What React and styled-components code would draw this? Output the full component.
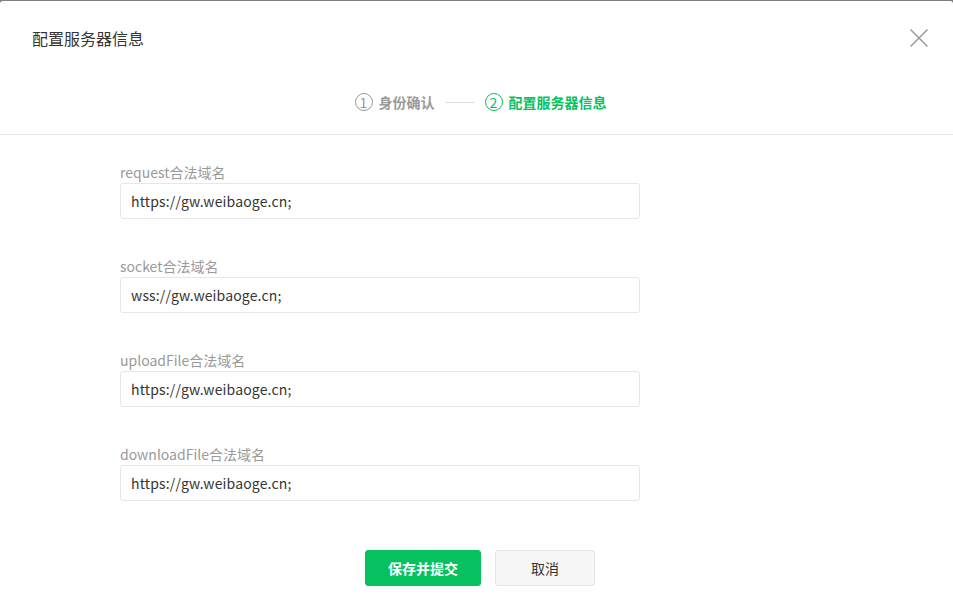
import React from 'react';
import styled, { createGlobalStyle } from 'styled-components';

const GlobalStyle = createGlobalStyle`
  html, body {
    margin: 0;
    padding: 0;
    background: #7f7f7f;
    font-family: "Noto Sans CJK SC", "Noto Sans", sans-serif;
  }
  * { box-sizing: border-box; }
`;

const Dialog = styled.div`
  margin-top: 1px;
  height: 607px;
  background: #fff;
  border-radius: 3px 3px 0 0;
  overflow: hidden;
`;

const Header = styled.div`
  height: 73px;
  padding: 0 25px 0 32px;
  display: flex;
  align-items: center;
  justify-content: space-between;
`;

const Title = styled.h3`
  margin: 0;
  font-size: 16px;
  font-weight: 400;
  color: #353535;
`;

const Close = styled.button`
  width: 18px;
  height: 18px;
  padding: 0;
  border: 0;
  background: none;
  display: flex;
  cursor: pointer;
`;

const Steps = styled.div`
  height: 61px;
  padding: 17px 0 21px 8px;
  border-bottom: 1px solid #e7e7e7;
  display: flex;
  justify-content: center;
  align-items: center;
`;

const Step = styled.div`
  display: flex;
  align-items: center;
  gap: 6px;
  font-size: 14px;
  font-weight: 700;
  color: ${p => (p.$active ? '#07c160' : '#9a9a9a')};
`;

const Num = styled.span`
  width: 18px;
  height: 18px;
  border-radius: 50%;
  border: 1.5px solid currentColor;
  display: flex;
  align-items: center;
  justify-content: center;
  font-size: 14px;
  font-weight: 400;
  line-height: 1;
`;

const Line = styled.span`
  width: 30px;
  height: 1px;
  background: #dcdfe3;
  margin: 0 10px;
`;

const Form = styled.div`
  padding: 27px 0 0 120px;
  display: flex;
  flex-direction: column;
  gap: 37px;
`;

const Field = styled.div`
  display: flex;
  flex-direction: column;
  gap: 1px;
`;

const Label = styled.label`
  font-size: 14px;
  line-height: 20px;
  color: #9a9a9a;
`;

const Input = styled.input`
  width: 520px;
  height: 36px;
  border: 1px solid #e7e7e7;
  border-radius: 3px;
  padding: 0 10px;
  font-family: inherit;
  font-size: 14px;
  letter-spacing: 0.15px;
  color: #353535;
  outline: none;
`;

const Actions = styled.div`
  margin-top: 49px;
  display: flex;
  justify-content: center;
  gap: 14px;
  padding-left: 7px;
`;

const Button = styled.button`
  height: 36px;
  width: ${p => (p.$primary ? '116px' : '100px')};
  border-radius: 3px;
  border: 1px solid ${p => (p.$primary ? '#07c160' : '#e4e6e9')};
  background: ${p => (p.$primary ? '#07c160' : '#f7f7f7')};
  color: ${p => (p.$primary ? '#fff' : '#353535')};
  font-family: inherit;
  font-size: 14px;
  font-weight: ${p => (p.$primary ? 700 : 400)};
  cursor: pointer;
`;

const fields = [
  { label: 'request合法域名', value: 'https://gw.weibaoge.cn;' },
  { label: 'socket合法域名', value: 'wss://gw.weibaoge.cn;' },
  { label: 'uploadFile合法域名', value: 'https://gw.weibaoge.cn;' },
  { label: 'downloadFile合法域名', value: 'https://gw.weibaoge.cn;' },
];

export default function App() {
  return (
    <>
      <GlobalStyle />
      <Dialog>
        <Header>
          <Title>配置服务器信息</Title>
          <Close aria-label="关闭">
            <svg width="18" height="18" viewBox="0 0 18 18">
              <path d="M0.5 0.5L17.5 17.5M17.5 0.5L0.5 17.5" stroke="#9a9a9a" strokeWidth="1.5" fill="none" />
            </svg>
          </Close>
        </Header>
        <Steps>
          <Step>
            <Num>1</Num>
            身份确认
          </Step>
          <Line />
          <Step $active>
            <Num>2</Num>
            配置服务器信息
          </Step>
        </Steps>
        <Form>
          {fields.map(f => (
            <Field key={f.label}>
              <Label>{f.label}</Label>
              <Input defaultValue={f.value} />
            </Field>
          ))}
        </Form>
        <Actions>
          <Button $primary>保存并提交</Button>
          <Button>取消</Button>
        </Actions>
      </Dialog>
    </>
  );
}
